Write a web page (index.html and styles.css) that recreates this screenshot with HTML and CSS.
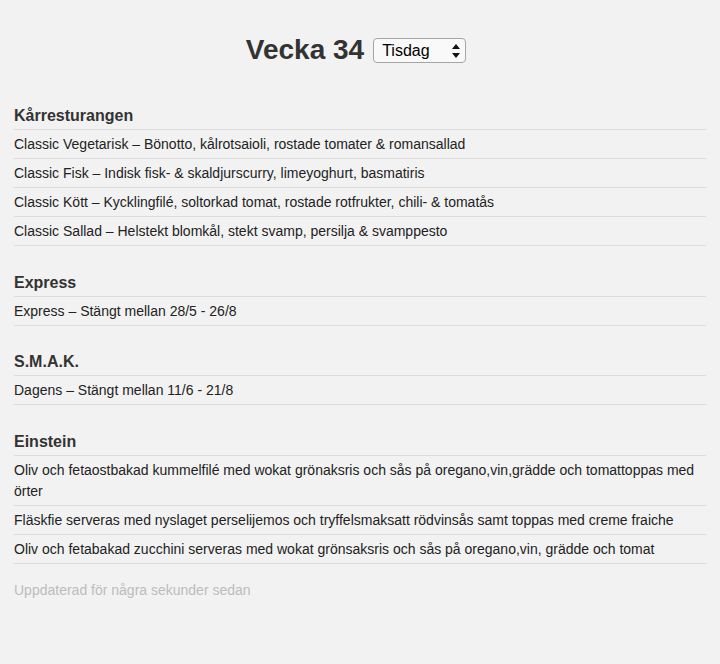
FILE: index.html
```html
<!DOCTYPE html>
<html lang="sv">
<head>
<meta charset="utf-8">
<link rel="stylesheet" href="styles.css">
</head>
<body>
<div class="page">
  <header class="top">
    <h1 class="title">Vecka 34</h1>
    <div class="select-wrap">
      <select class="day">
        <option>Måndag</option>
        <option selected>Tisdag</option>
        <option>Onsdag</option>
        <option>Torsdag</option>
        <option>Fredag</option>
      </select>
      <svg class="arrows" width="8" height="14" viewBox="0 0 8 14"><path d="M4 0 L8 5 L0 5 Z M0 9 L8 9 L4 14 Z" fill="#111"/></svg>
    </div>
  </header>

  <section class="rest">
    <h2 class="rest-name">Kårresturangen</h2>
    <ul class="menu">
      <li>Classic Vegetarisk – Bönotto, kålrotsaioli, rostade tomater &amp; romansallad</li>
      <li>Classic Fisk – Indisk fisk- &amp; skaldjurscurry, limeyoghurt, basmatiris</li>
      <li>Classic Kött – Kycklingfilé, soltorkad tomat, rostade rotfrukter, chili- &amp; tomatås</li>
      <li>Classic Sallad – Helstekt blomkål, stekt svamp, persilja &amp; svamppesto</li>
    </ul>
  </section>

  <section class="rest">
    <h2 class="rest-name">Express</h2>
    <ul class="menu">
      <li>Express – Stängt mellan 28/5 - 26/8</li>
    </ul>
  </section>

  <section class="rest">
    <h2 class="rest-name">S.M.A.K.</h2>
    <ul class="menu">
      <li>Dagens – Stängt mellan 11/6 - 21/8</li>
    </ul>
  </section>

  <section class="rest">
    <h2 class="rest-name">Einstein</h2>
    <ul class="menu">
      <li>Oliv och fetaostbakad kummelfilé med wokat grönaksris och sås på oregano,vin,grädde och tomattoppas med örter</li>
      <li>Fläskfie serveras med nyslaget perselijemos och tryffelsmaksatt rödvinsås samt toppas med creme fraiche</li>
      <li>Oliv och fetabakad zucchini serveras med wokat grönsaksris och sås på oregano,vin, grädde och tomat</li>
    </ul>
  </section>

  <p class="updated">Uppdaterad för några sekunder sedan</p>
</div>
</body>
</html>
```

FILE: styles.css
```css
html, body {
  margin: 0;
  padding: 0;
  background: #f2f2f2;
}

body {
  font-family: "Liberation Sans", Arial, sans-serif;
  color: #333;
}

.page {
  padding: 0 14px;
}

.top {
  display: flex;
  justify-content: center;
  align-items: center;
  gap: 9px;
  padding: 32px 0 11.5px;
  margin-right: 8px;
}

.title {
  margin: 0;
  font-size: 28px;
  line-height: 36px;
  font-weight: bold;
  color: #333;
}

.select-wrap {
  position: relative;
  display: flex;
}

.day {
  appearance: none;
  -webkit-appearance: none;
  width: 93px;
  height: 25px;
  margin: 0;
  padding: 0 0 0 8px;
  border: 1px solid #a6a6a6;
  border-radius: 4px;
  background: #f9f9f9;
  font-family: "Liberation Sans", Arial, sans-serif;
  font-size: 16px;
  color: #000;
}

.arrows {
  position: absolute;
  right: 6px;
  top: 6px;
  pointer-events: none;
}

.rest {
  margin-top: 24.5px;
}

.rest-name {
  margin: 0;
  font-size: 16px;
  line-height: 24px;
  font-weight: bold;
  padding-bottom: 1px;
  border-bottom: 1px solid #dcdcdc;
  color: #333;
}

.menu {
  list-style: none;
  margin: 0;
  padding: 0;
}

.menu li {
  font-size: 14px;
  line-height: 21px;
  padding: 4px 0 3px;
  border-bottom: 1px solid #dcdcdc;
  color: #222;
}

.updated {
  margin: 16px 0 0;
  font-size: 14px;
  line-height: 21px;
  color: #bcbcbc;
}
```
